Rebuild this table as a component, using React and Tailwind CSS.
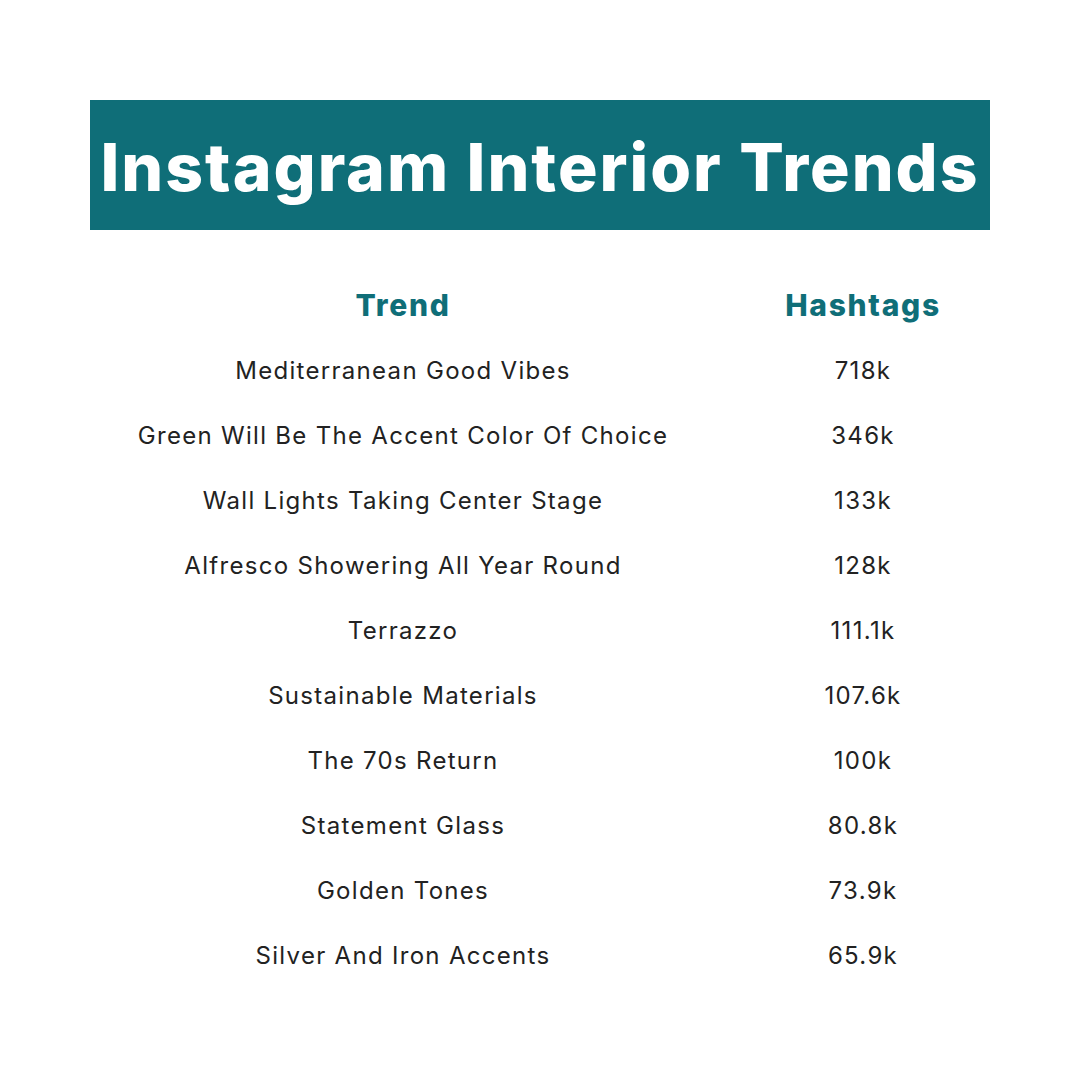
import React from 'react';

const trends = [
  ['Mediterranean Good Vibes', '718k'],
  ['Green Will Be The Accent Color Of Choice', '346k'],
  ['Wall Lights Taking Center Stage', '133k'],
  ['Alfresco Showering All Year Round', '128k'],
  ['Terrazzo', '111.1k'],
  ['Sustainable Materials', '107.6k'],
  ['The 70s Return', '100k'],
  ['Statement Glass', '80.8k'],
  ['Golden Tones', '73.9k'],
  ['Silver And Iron Accents', '65.9k'],
];

export default function App() {
  return (
    <div
      className="w-[1080px] h-[1080px] bg-white pt-[100px]"
      style={{ fontFamily: 'Inter, "Open Sans", sans-serif' }}
    >
      {/* title banner */}
      <div className="mx-[90px] h-[130px] bg-[#0f6e78] flex items-center justify-center">
        <h1 className="text-white text-[66px] font-extrabold tracking-[2px] leading-none pt-[4px]">
          Instagram Interior Trends
        </h1>
      </div>

      {/* table */}
      <div className="ml-[90px] mt-[43px] grid grid-cols-[626px_294px]">
        <div className="h-[65px] flex items-center justify-center text-[30px] font-extrabold tracking-[1.7px] text-[#0f6e78]">
          Trend
        </div>
        <div className="h-[65px] flex items-center justify-center text-[30px] font-extrabold tracking-[1.7px] text-[#0f6e78]">
          Hashtags
        </div>
        {trends.map(([name, count]) => (
          <React.Fragment key={name}>
            <div className="h-[65px] flex items-center justify-center text-[24px] tracking-[1.3px] text-[#222222]">
              {name}
            </div>
            <div className="h-[65px] flex items-center justify-center text-[24px] tracking-[1.3px] text-[#222222]">
              {count}
            </div>
          </React.Fragment>
        ))}
      </div>
    </div>
  );
}
